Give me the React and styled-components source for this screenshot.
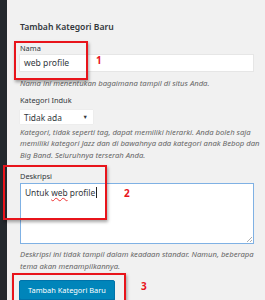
import React from 'react'
import { styled, createGlobalStyle } from 'styled-components'

const Global = createGlobalStyle`
  html, body { margin: 0; padding: 0; background: #f1f1f1; }
  body { width: 265px; height: 300px; overflow: hidden; }
`

const Page = styled.div`
  display: flex;
  width: 265px;
  height: 300px;
  overflow: hidden;
  position: relative;
  font-family: "Noto Sans", "Open Sans", sans-serif;
  color: #23282d;
`

const Sidebar = styled.div`
  width: 7px;
  flex-shrink: 0;
  background: #23282d;
`

const Main = styled.div`
  flex: 1;
  padding: 21px 11px 0 13px;
  display: flex;
  flex-direction: column;
  min-width: 0;
`

const Title = styled.h2`
  margin: 0;
  font-size: 8.6px;
  line-height: 12px;
  font-weight: 600;
  color: #32373c;
`

const Label = styled.div`
  font-size: 7.4px;
  line-height: 10px;
  margin-top: ${p => p.$top}px;
  color: #32373c;
`

const Input = styled.div`
  margin: 1px 0 0 -1px;
  height: 18px;
  background: #fff;
  border: 1px solid #e6e6e6;
  box-sizing: border-box;
  display: flex;
  align-items: center;
  padding-left: 4px;
  font-size: 8.6px;
  color: #32373c;
`

const Help = styled.p`
  margin: ${p => p.$top}px -40px 0 0;
  font-size: 7.7px;
  line-height: ${p => p.$lh || 11.5}px;
  font-style: italic;
  color: #666;
  white-space: nowrap;
`

const Select = styled.div`
  margin-top: 5px;
  width: 73px;
  height: 14px;
  background: #fff;
  box-sizing: border-box;
  display: flex;
  align-items: center;
  justify-content: space-between;
  padding: 0 5px 0 4px;
  font-size: 8.4px;
  color: #32373c;
  box-shadow: 0 0 1px rgba(0,0,0,0.1);
`

const Caret = styled.span`
  font-size: 5.5px;
`

const TextArea = styled.div`
  margin-top: 2px;
  height: 62px;
  background: #fff;
  border: 1px solid #7fb1e4;
  box-sizing: border-box;
  padding: 3px 4px;
  font-size: 8.4px;
  line-height: 12px;
  color: #32373c;
  position: relative;
`

const Spell = styled.span`
  text-decoration: underline wavy #e33;
  text-decoration-thickness: 0.5px;
  text-underline-offset: 1px;
`

const Cursor = styled.span`
  border-left: 1px solid #222;
  margin-left: 1px;
`

const Grip = styled.svg`
  position: absolute;
  right: 1px;
  bottom: 1px;
`

const Button = styled.button`
  margin: 8px 0 0 -1px;
  align-self: flex-start;
  height: 20px;
  padding: 0 8px;
  background: #0085ba;
  border: 1px solid #0073aa;
  border-radius: 2px;
  color: #fff;
  font-family: inherit;
  font-size: 7.4px;
  box-shadow: 0 1px 0 #006799;
`

const Mark = styled.div`
  position: absolute;
  left: ${p => p.$x}px;
  top: ${p => p.$y}px;
  width: ${p => p.$w}px;
  height: ${p => p.$h}px;
  border: 2px solid #e8141b;
  box-sizing: border-box;
  box-shadow: 1px 2px 3px rgba(0,0,0,0.35);
`

const Num = styled.span`
  position: absolute;
  left: ${p => p.$x}px;
  top: ${p => p.$y}px;
  color: #e8141b;
  font-weight: 700;
  font-size: 10px;
  line-height: 10px;
`

export default function App () {
  return (
    <Page>
      <Global />
      <Sidebar />
      <Main>
        <Title>Tambah Kategori Baru</Title>
        <Label $top={10}>Nama</Label>
        <Input>web profile</Input>
        <Help $top={6}>Nama ini menentukan bagaimana tampil di situs Anda.</Help>
        <Label $top={6}>Kategori Induk</Label>
        <Select>Tidak ada<Caret>▼</Caret></Select>
        <Help $top={3}>
          Kategori, tidak seperti tag, dapat memiliki hierarki. Anda boleh saja<br />
          memiliki kategori Jazz dan di bawahnya ada kategori anak Bebop dan<br />
          Big Band. Seluruhnya terserah Anda.
        </Help>
        <Label $top={10}>Deskripsi</Label>
        <TextArea>
          Untuk <Spell>web</Spell> profile<Cursor />
          <Grip width="6" height="6" viewBox="0 0 6 6">
            <path d="M6 1L1 6M6 4L4 6" stroke="#999" strokeWidth="0.8" />
          </Grip>
        </TextArea>
        <Help $top={4} $lh={12}>
          Deskripsi ini tidak tampil dalam keadaan standar. Namun, beberapa<br />
          tema akan menampilkannya.
        </Help>
        <Button>Tambah Kategori Baru</Button>
      </Main>
      <Mark $x={14} $y={41} $w={74} $h={39} />
      <Num $x={96} $y={55}>1</Num>
      <Mark $x={3} $y={165} $w={104} $h={55} />
      <Num $x={124} $y={188}>2</Num>
      <Mark $x={12} $y={273} $w={114} $h={40} />
      <Num $x={141} $y={281}>3</Num>
    </Page>
  )
}
